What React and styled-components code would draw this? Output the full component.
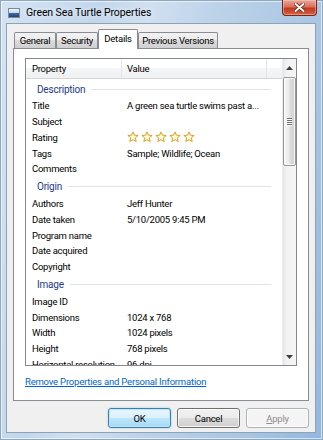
import React from 'react';
import styled, { createGlobalStyle } from 'styled-components';

const GlobalStyle = createGlobalStyle`
  html, body {
    margin: 0;
    padding: 0;
    overflow: hidden;
  }

  body {
    font-family: Roboto, "Liberation Sans", sans-serif;
    font-size: 9.5px;
    letter-spacing: -0.25px;
    color: #000;
  }
`;

const Window = styled.div`
  box-sizing: border-box;
  width: 323px;
  height: 440px;
  display: flex;
  flex-direction: column;
  padding: 0 6px 6px 5px;
  border: 1px solid #8fa7bf;
  background: linear-gradient(
    100deg,
    #d4e3f2 0%,
    #c2d7ec 25%,
    #d0e0f0 38%,
    #bcd2e9 55%,
    #aac6e3 80%,
    #93b7de 100%
  );
  box-shadow: inset 0 0 0 1px rgba(255, 255, 255, 0.6);
`;

const TitleBar = styled.div`
  height: 22px;
  display: flex;
  align-items: center;
  padding-left: 2px;
`;

const Caption = styled.span`
  font-size: 10.5px;
  letter-spacing: -0.1px;
  color: #000;
  margin-left: 6px;
  text-shadow: 0 0 6px rgba(255, 255, 255, 0.9);
`;

const CloseButton = styled.div`
  margin-left: auto;
  margin-right: -1px;
  align-self: flex-start;
  margin-top: -1px;
  width: 35px;
  height: 16px;
  display: flex;
  align-items: center;
  justify-content: center;
  box-sizing: border-box;
  border: 1px solid #6e2a22;
  border-top: none;
  border-radius: 0 0 4px 4px;
  background: linear-gradient(#e9a99b 0%, #d8705c 45%, #c13a22 55%, #d5603f 100%);
  box-shadow: inset 0 0 0 1px rgba(255, 200, 190, 0.5);
`;

const Client = styled.div`
  flex: 1;
  min-height: 0;
  display: flex;
  flex-direction: column;
  padding: 5px 6px 0 6px;
  background: #f0f0f0;
  border: 1px solid #8da2b6;
`;

const TabStrip = styled.div`
  height: 19px;
  display: flex;
  align-items: flex-end;
  padding-left: 1px;
`;

const Tab = styled.div`
  box-sizing: border-box;
  width: ${(p) => p.$width}px;
  height: ${(p) => (p.$active ? 20 : 16)}px;
  margin-bottom: ${(p) => (p.$active ? -1 : 0)}px;
  position: relative;
  z-index: ${(p) => (p.$active ? 1 : 0)};
  display: flex;
  align-items: center;
  justify-content: center;
  padding-bottom: ${(p) => (p.$active ? 2 : 0)}px;
  border: 1px solid #898c95;
  border-bottom: none;
  border-radius: 2px 2px 0 0;
  background: ${(p) =>
    p.$active
      ? '#fff'
      : 'linear-gradient(#f2f2f2 0%, #ebebeb 49%, #dddddd 50%, #cfcfcf 100%)'};
  white-space: nowrap;
`;

const Panel = styled.div`
  flex: 1;
  min-height: 0;
  display: flex;
  flex-direction: column;
  padding: 9px 11px 0 11px;
  background: #fff;
  border: 1px solid #898c95;
`;

const ListBox = styled.div`
  height: 308px;
  box-sizing: border-box;
  display: flex;
  border: 1px solid #828790;
  overflow: hidden;
`;

const ListBody = styled.div`
  flex: 1;
  min-width: 0;
  overflow: hidden;
`;

const HeaderRow = styled.div`
  height: 20px;
  box-sizing: border-box;
  display: flex;
  border-bottom: 1px solid #d5d5d5;
  background: linear-gradient(#ffffff 0%, #ffffff 45%, #f5f6f7 46%, #f0f1f2 100%);
`;

const HeaderCell = styled.div`
  box-sizing: border-box;
  width: ${(p) => (p.$width ? `${p.$width}px` : 'auto')};
  flex: ${(p) => (p.$width ? 'none' : 1)};
  display: flex;
  align-items: center;
  padding-left: ${(p) => p.$indent || 0}px;
  border-right: ${(p) => (p.$width ? '1px solid #e3e5e8' : 'none')};
`;

const GroupRow = styled.div`
  height: 19px;
  display: flex;
  align-items: center;
  padding: 1px 11px 0 11px;
  box-sizing: border-box;
`;

const GroupLabel = styled.span`
  color: #1e3a8a;
  font-size: 10px;
  letter-spacing: -0.2px;
`;

const GroupRule = styled.div`
  flex: 1;
  height: 1px;
  margin-left: 6px;
  background: #dfe4ec;
`;

const Row = styled.div`
  height: 15.75px;
  display: flex;
  align-items: center;
  white-space: nowrap;
`;

const Label = styled.div`
  width: 101px;
  box-sizing: border-box;
  padding: 0 5px 0 6px;
  flex: none;
  overflow: hidden;
`;

const Value = styled.div`
  display: flex;
  align-items: center;
  gap: 2px;
`;

const Scrollbar = styled.div`
  width: 13px;
  flex: none;
  display: flex;
  flex-direction: column;
  background: linear-gradient(90deg, #e6e6e6 0%, #f3f3f3 30%, #f5f5f5 100%);
  border-left: 1px solid #ececec;
`;

const ScrollArrow = styled.div`
  height: 17px;
  display: flex;
  align-items: center;
  justify-content: center;
`;

const Thumb = styled.div`
  height: 89px;
  margin-top: 1px;
  box-sizing: border-box;
  border: 1px solid #979797;
  border-radius: 2px;
  background: linear-gradient(90deg, #f6f6f6 0%, #ececec 45%, #dcdcdc 55%, #d2d2d2 100%);
  box-shadow: inset 0 0 0 1px rgba(255, 255, 255, 0.8);
  display: flex;
  flex-direction: column;
  align-items: center;
  justify-content: center;
  gap: 1px;
`;

const Grip = styled.div`
  width: 5px;
  height: 1px;
  background: #6f6f6f;
  box-shadow: 0 1px 0 #fff;
`;

const Track = styled.div`
  flex: 1;
`;

const Link = styled.a`
  align-self: flex-start;
  margin-top: 9px;
  line-height: 13px;
  letter-spacing: -0.2px;
  color: #0066cc;
  text-decoration: underline;
  cursor: pointer;
`;

const Footer = styled.div`
  display: flex;
  justify-content: flex-end;
  gap: 6px;
  padding: 7px 0 4px;
`;

const buttonSkins = {
  default: `
    border-color: #3c7fb1;
    background: linear-gradient(#eaf6fd 0%, #d9f0fc 49%, #bee6fd 50%, #a7d9f5 100%);
    box-shadow: inset 0 0 0 1px #bfe4f8, 0 0 2px rgba(60, 160, 220, 0.5);
    color: #000;
  `,
  normal: `
    border-color: #707070;
    background: linear-gradient(#f2f2f2 0%, #ebebeb 49%, #dddddd 50%, #cfcfcf 100%);
    box-shadow: inset 0 0 0 1px rgba(255, 255, 255, 0.75);
    color: #000;
  `,
  disabled: `
    border-color: #adb2b5;
    background: #f4f4f4;
    box-shadow: inset 0 0 0 1px rgba(255, 255, 255, 0.75);
    color: #8d8d8d;
  `,
};

const Button = styled.div`
  box-sizing: border-box;
  width: 63px;
  height: 20px;
  display: flex;
  align-items: center;
  justify-content: center;
  border: 1px solid;
  border-radius: 3px;
  ${(p) => buttonSkins[p.$variant || 'normal']}

  u {
    text-decoration: underline;
  }
`;

const AppIcon = () => (
  <svg width="12" height="11" viewBox="0 0 12 11">
    <defs>
      <linearGradient id="pic" x1="0" y1="0" x2="0" y2="1">
        <stop offset="0" stopColor="#f4f7fb" />
        <stop offset="0.45" stopColor="#c9d9ea" />
        <stop offset="0.55" stopColor="#3c6aa3" />
        <stop offset="1" stopColor="#1d3f6e" />
      </linearGradient>
    </defs>
    <rect x="0.5" y="1.5" width="11" height="9" fill="url(#pic)" stroke="#7c8a99" />
  </svg>
);

const CloseGlyph = () => (
  <svg width="11" height="9" viewBox="0 0 11 9">
    <path d="M1.5 1 L9.5 8 M9.5 1 L1.5 8" stroke="#5a1a12" strokeWidth="3.4" strokeLinecap="round" />
    <path d="M1.5 1 L9.5 8 M9.5 1 L1.5 8" stroke="#fff" strokeWidth="2" strokeLinecap="round" />
  </svg>
);

const Star = () => (
  <svg width="12" height="12" viewBox="0 0 12 12">
    <defs>
      <radialGradient id="starFill" cx="0.5" cy="0.55" r="0.6">
        <stop offset="0" stopColor="#fffef2" />
        <stop offset="0.6" stopColor="#fdf1b8" />
        <stop offset="1" stopColor="#f3d26b" />
      </radialGradient>
    </defs>
    <path
      d="M6 0.9 L7.5 4.2 L11.1 4.5 L8.4 6.9 L9.2 10.6 L6 8.7 L2.8 10.6 L3.6 6.9 L0.9 4.5 L4.5 4.2 Z"
      fill="url(#starFill)"
      stroke="#d09a1c"
      strokeWidth="0.9"
      strokeLinejoin="round"
    />
  </svg>
);

const Arrow = ({ down }) => (
  <svg width="7" height="4" viewBox="0 0 7 4">
    <path d={down ? 'M0 0 L7 0 L3.5 4 Z' : 'M0 4 L7 4 L3.5 0 Z'} fill="#404040" />
  </svg>
);

const groups = [
  {
    name: 'Description',
    rows: [
      ['Title', 'A green sea turtle swims past a...'],
      ['Subject', ''],
      ['Rating', 'stars'],
      ['Tags', 'Sample; Wildlife; Ocean'],
      ['Comments', ''],
    ],
  },
  {
    name: 'Origin',
    rows: [
      ['Authors', 'Jeff Hunter'],
      ['Date taken', '5/10/2005 9:45 PM'],
      ['Program name', ''],
      ['Date acquired', ''],
      ['Copyright', ''],
    ],
  },
  {
    name: 'Image',
    rows: [
      ['Image ID', ''],
      ['Dimensions', '1024 x 768'],
      ['Width', '1024 pixels'],
      ['Height', '768 pixels'],
      ['Horizontal resolution', '96 dpi'],
    ],
  },
];

const tabs = [
  { label: 'General', width: 42 },
  { label: 'Security', width: 42 },
  { label: 'Details', width: 40, active: true },
  { label: 'Previous Versions', width: 80 },
];

export default function App() {
  return (
    <>
      <GlobalStyle />
      <Window>
        <TitleBar>
          <AppIcon />
          <Caption>Green Sea Turtle Properties</Caption>
          <CloseButton>
            <CloseGlyph />
          </CloseButton>
        </TitleBar>

        <Client>
          <TabStrip>
            {tabs.map((t) => (
              <Tab key={t.label} $width={t.width} $active={t.active}>
                {t.label}
              </Tab>
            ))}
          </TabStrip>

          <Panel>
            <ListBox>
              <ListBody>
                <HeaderRow>
                  <HeaderCell $width={96} $indent={6}>Property</HeaderCell>
                  <HeaderCell $width={145} $indent={5}>Value</HeaderCell>
                  <HeaderCell />
                </HeaderRow>

                {groups.map((g) => (
                  <React.Fragment key={g.name}>
                    <GroupRow>
                      <GroupLabel>{g.name}</GroupLabel>
                      <GroupRule />
                    </GroupRow>
                    {g.rows.map(([label, value]) => (
                      <Row key={label}>
                        <Label>{label}</Label>
                        <Value>
                          {value === 'stars'
                            ? [0, 1, 2, 3, 4].map((i) => <Star key={i} />)
                            : value}
                        </Value>
                      </Row>
                    ))}
                  </React.Fragment>
                ))}
              </ListBody>

              <Scrollbar>
                <ScrollArrow>
                  <Arrow />
                </ScrollArrow>
                <Thumb>
                  <Grip />
                  <Grip />
                  <Grip />
                  <Grip />
                </Thumb>
                <Track />
                <ScrollArrow>
                  <Arrow down />
                </ScrollArrow>
              </Scrollbar>
            </ListBox>

            <Link>Remove Properties and Personal Information</Link>
          </Panel>

          <Footer>
            <Button $variant="default">OK</Button>
            <Button>Cancel</Button>
            <Button $variant="disabled">
              <span>
                <u>A</u>pply
              </span>
            </Button>
          </Footer>
        </Client>
      </Window>
    </>
  );
}
